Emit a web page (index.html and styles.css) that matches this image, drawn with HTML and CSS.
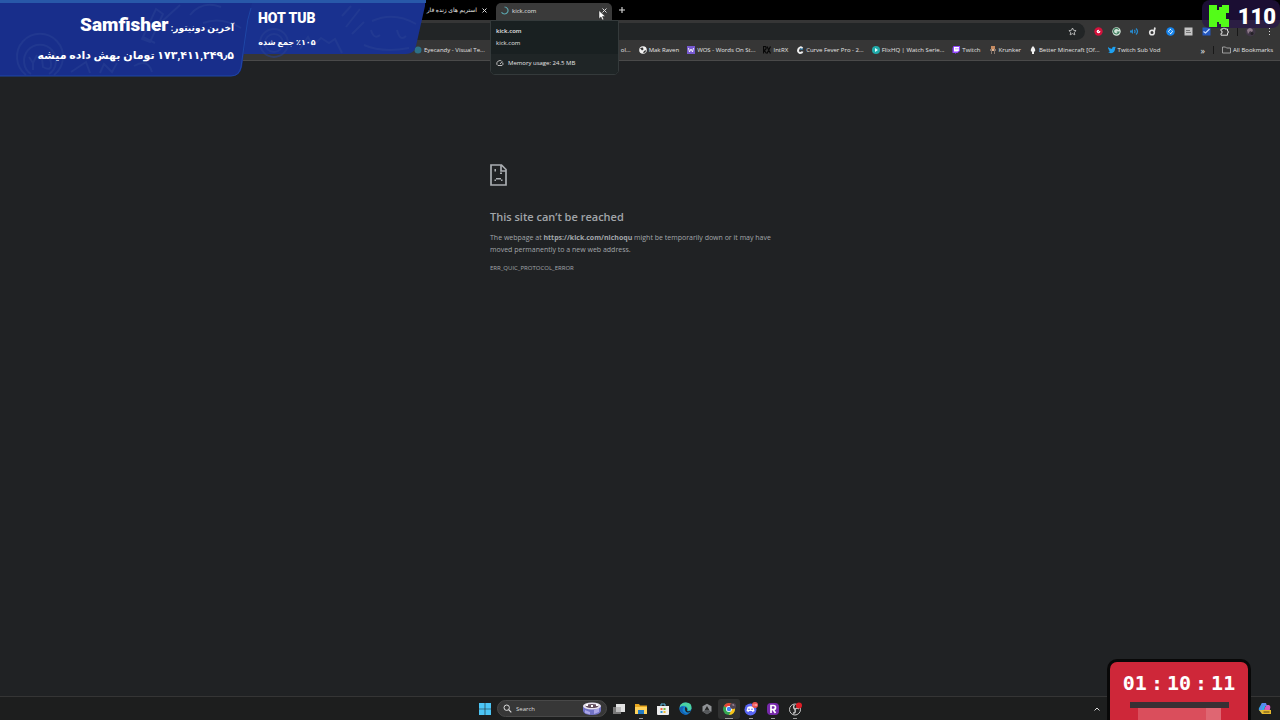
FILE: index.html
```html
<!DOCTYPE html>
<html lang="en">
<head>
    <meta charset="UTF-8">
    <meta name="viewport" content="width=device-width, initial-scale=1.0">
    <title>kick.com</title>
    <link rel="stylesheet" href="styles.css">
</head>
<body>
    <header class="browser">
        <div class="tab-strip">
            <div class="tab">
                <button class="tab-title" dir="rtl">استریم های زنده فار</button>
                <button class="icon-button" aria-label="Close tab"><svg width="5" height="5" viewBox="0 0 5 5"><path d="M.5.5l4 4M4.5.5l-4 4" stroke="#ddd"/></svg></button>
            </div>
            <div class="tab active">
                <svg width="9" height="9" viewBox="0 0 9 9"><path d="M4.5 1A3.5 3.5 0 1 1 1.5 6.3" fill="none" stroke="#5ba4ac" stroke-width="1.2"/></svg>
                <button class="tab-title">kick.com</button>
                <button class="icon-button" aria-label="Close tab"><svg width="5" height="5" viewBox="0 0 5 5"><path d="M.5.5l4 4M4.5.5l-4 4" stroke="#ddd"/></svg></button>
            </div>
            <button class="icon-button new-tab" aria-label="New tab"><svg width="6" height="6" viewBox="0 0 6 6"><path d="M3 0v6M0 3h6" stroke="#ddd" stroke-width="1.1"/></svg></button>
        </div>

        <div class="toolbar">
            <div class="address-bar">
                <input type="text" aria-label="Address">
                <button class="icon-button" aria-label="Bookmark this tab"><svg width="9" height="9" viewBox="0 0 9 9"><path d="M4.5 1l1.1 2.3 2.5.3-1.8 1.7.5 2.5-2.3-1.2-2.3 1.2.5-2.5L.9 3.6l2.5-.3z" fill="none" stroke="#d0d0d0" stroke-width=".8"/></svg></button>
            </div>
            <div class="extensions">
                <button class="icon-button" aria-label="Adblock"><svg width="9" height="9" viewBox="0 0 9 9"><circle cx="4.5" cy="4.5" r="4.2" fill="#d5123c"/><circle cx="4.5" cy="4.5" r="1.8" fill="#fff"/><path d="M4.5 4.5l1.8-1.8" stroke="#d5123c"/></svg></button>
                <button class="icon-button" aria-label="Grammarly"><svg width="9" height="9" viewBox="0 0 9 9"><circle cx="4.5" cy="4.5" r="4.2" fill="#d4e6da"/><path d="M6.7 2.7A2.8 2.8 0 1 0 7 5H4.8" fill="none" stroke="#3c7b5c" stroke-width="1.2"/></svg></button>
                <button class="icon-button" aria-label="Volume"><svg width="9" height="9" viewBox="0 0 9 9"><path d="M0 3.5h1.5L3 2v5L1.5 5.5H0z" fill="#278bd0"/><path d="M4.4 3q1.3 1.500 0 3M6 1.500q3 3 0 6" fill="none" stroke="#278bd0" stroke-width="1.2"/></svg></button>
                <button class="icon-button" aria-label="Downloader"><svg width="9" height="9" viewBox="0 0 9 9"><circle cx="4" cy="5.5" r="2.3" fill="none" stroke="#e4e4e4" stroke-width="1.6"/><path d="M6 5L7 .5" stroke="#e4e4e4" stroke-width="1.7"/></svg></button>
                <button class="icon-button" aria-label="Shazam"><svg width="9" height="9" viewBox="0 0 9 9"><circle cx="4.5" cy="4.5" r="4.3" fill="#1685ee"/><path d="M5 2L3 3.6q-1 1 .3 2M4 7l2-1.6q1-1-.3-2" fill="none" stroke="#fff"/></svg></button>
                <button class="icon-button" aria-label="Reader"><svg width="9" height="9" viewBox="0 0 9 9"><path d="M.5.5h8v8h-8z" fill="#c4c4c4"/><path d="M2 3.5h4M2 5.500h5" stroke="#777"/></svg></button>
                <button class="icon-button" aria-label="Tracker"><svg width="9" height="9" viewBox="0 0 9 9"><path d="M.5.5h8v8h-8z" fill="#2457bd"/><path d="M1.5 4.500l2 1.500L7.500 2" fill="none" stroke="#c7ddff" stroke-width="1.2"/></svg></button>
                <button class="icon-button" aria-label="Extensions"><svg width="9" height="9" viewBox="0 0 9 9"><path d="M1 2h2V1h2v1h2.500v2h.7v2h-.7v2.200H1V6.300h1V4H1z" fill="none" stroke="#d8d8d8"/></svg></button>
            </div>
            <span class="divider"></span>
            <button class="icon-button" aria-label="Profile"><svg width="11" height="11" viewBox="0 0 11 11"><circle cx="5.5" cy="5.5" r="5" fill="#403746"/><path d="M2 4q3-4 6 0l-1 2-2-1-2 3z" fill="#8e7989"/><circle cx="7" cy="7.5" r="1.5" fill="#242027"/></svg></button>
            <button class="icon-button menu" aria-label="Menu"><svg width="3" height="9" viewBox="0 0 3 9"><path d="M1 1h1v1H1zM1 4h1v1H1zM1 7h1v1H1z" fill="#ddd"/></svg></button>
        </div>

        <nav class="bookmarks">
            <a href="#"><svg width="8" height="8" viewBox="0 0 8 8"><circle cx="4" cy="4" r="3.5" fill="#2d7187"/></svg><span>Eyecandy - Visual Te...</span></a>
            <a href="#" class="under-card"><span>ol...</span></a>
            <a href="#"><svg width="8" height="8" viewBox="0 0 8 8"><circle cx="4" cy="4" r="3.8" fill="#f2f2f2"/><path d="M1 2l3-.5.5 2L3 4.5zM5 5l2-1-.5 2.5L4 7z" fill="#333"/></svg><span>Mak Raven</span></a>
            <a href="#"><svg width="8" height="8" viewBox="0 0 8 8"><path d="M0 0h8v8H0z" fill="#7659d0"/><path d="M1.5 2l1 4L4 3l1.5 3 1-4" fill="none" stroke="#fff" stroke-width=".9"/></svg><span>WOS - Words On St...</span></a>
            <a href="#"><svg width="8" height="8" viewBox="0 0 8 8"><path d="M.5 7.500v-7h2q1.500 2-.5 3.500H1l2.500 3.500M4 .5l3.500 7M7.500.5L4 7.500" fill="none" stroke="#080808" stroke-width="1.2"/></svg><span>IntRX</span></a>
            <a href="#"><svg width="8" height="8" viewBox="0 0 8 8"><path d="M6.5 2.500Q4 0 2.500 3T4 7q2 0 2.500-1.500" fill="none" stroke="#eee" stroke-width="2"/><path d="M4 3h3" stroke="#2c91cf"/></svg><span>Curve Fever Pro - 2...</span></a>
            <a href="#"><svg width="8" height="8" viewBox="0 0 8 8"><circle cx="4" cy="4" r="4" fill="#20aaa9"/><path d="M3 2l3 2-3 2z" fill="#e4ffff"/></svg><span>FlixHQ | Watch Serie...</span></a>
            <a href="#"><svg width="8" height="8" viewBox="0 0 8 8"><path d="M1.5 0H8v5L5.500 7H4L3 8V7H.5V2z" fill="#9146ff"/><path d="M2 1h5v3.500L5.500 5.500H2z" fill="#fff"/><path d="M4 2v1.500M6 2v1.500" stroke="#9146ff" stroke-width=".7"/></svg><span>Twitch</span></a>
            <a href="#"><svg width="8" height="8" viewBox="0 0 8 8"><path d="M2 0h4v3H2z" fill="#c58b62"/><path d="M1 3h6v2H6v3H5V5H3v3H2V5H1z" fill="#86766d"/><path d="M3 3h2v2H3z" fill="#e1b38e"/></svg><span>Krunker</span></a>
            <a href="#"><svg width="8" height="8" viewBox="0 0 8 8"><path d="M4 0q3 3 2 5.500H5V8H3V5.500H2Q1 3 4 0z" fill="#eee"/></svg><span>Better Minecraft [Of...</span></a>
            <a href="#"><svg width="8" height="8" viewBox="0 0 8 8"><path d="M0 1q2 2 4 1.700Q4 .5 6 .7l1 .4 1-.3-.8 1.200Q7 7 3 7.300L0 6.500l2-.5L.6 4.500h1L.3 3z" fill="#1da1f2"/></svg><span>Twitch Sub Vod</span></a>
            <button class="more" aria-label="More bookmarks">»</button>
            <span class="divider"></span>
            <a href="#"><svg width="9" height="8" viewBox="0 0 9 8"><path d="M.5 1h3l1 1h4v5h-8z" fill="none" stroke="#aaa" stroke-width=".9"/></svg><span>All Bookmarks</span></a>
        </nav>

        <div class="tab-card">
            <div class="tab-card-title">
                <strong>kick.com</strong>
                <span>kick.com</span>
            </div>
            <div class="tab-card-memory">
                <svg width="8" height="8" viewBox="0 0 8 8"><path d="M2 6.5Q0 5.5 1 3.5T4 1.5q1 0 1.5.5M6.7 3.5q1 2-.7 3H2M4 5l2.3-2.5" fill="none" stroke="#ccc" stroke-width=".9"/></svg>
                <span>Memory usage: 24.5 MB</span>
            </div>
        </div>
        <svg class="cursor" width="8" height="11" viewBox="0 0 8 11"><path d="M1 .5v8.200l2-1.800 1.300 3 1.500-.7L4.500 6.500h2.800z" fill="#fff" stroke="#222" stroke-width=".5"/></svg>
    </header>

    <main class="page">
        <div class="error">
            <svg width="17" height="22" viewBox="0 0 17 22"><path d="M1 1h10.500L16 5.500V21H1zM11 1v6h5" fill="none" stroke="#a9adb1" stroke-width="1.700"/><path d="M4.500 5H6v2.500H4.500zM10 8.500h2V10h-2zM6 14h5v1.500H6zM4.500 15.500H6V17H4.500zM11 15.500h1.500V17H11z" fill="#a9adb1"/></svg>
            <h1>This site can’t be reached</h1>
            <p>The webpage at <strong>https://kick.com/nichoqu</strong> might be temporarily down or it may have moved permanently to a new web address.</p>
            <p class="error-code">ERR_QUIC_PROTOCOL_ERROR</p>
        </div>
    </main>

    <footer class="taskbar">
        <div class="apps">
            <button class="app" aria-label="Start"><svg width="12" height="12" viewBox="0 0 12 12"><path d="M0 0h5.700v5.700H0zM6.300 0H12v5.700H6.300zM0 6.300h5.700V12H0zM6.300 6.300H12V12H6.300z" fill="#4cc5f5"/></svg></button>
            <label class="search">
                <svg width="9" height="9" viewBox="0 0 9 9"><circle cx="3.7" cy="3.7" r="2.7" fill="none" stroke="#ddd"/><path d="M5.7 5.7L8.3 8.3" stroke="#ddd" stroke-width="1.2"/></svg>
                <input type="text" placeholder="Search" aria-label="Search">
                <svg width="20" height="14" viewBox="0 0 20 14"><path d="M1 4h18v5q-1 4-9 4t-9-4z" fill="#7172c5"/><path d="M3 8l5 2v2.5L3 11zM12 8l5-2v4l-5 2z" fill="#aaa5e6"/><ellipse cx="10" cy="4" rx="9" ry="3.5" fill="#e8e2ef"/><ellipse cx="10" cy="4" rx="6.500" ry="2" fill="#65505f"/><path d="M4 2h2v2H4zM9 3h2v2H9zM14 2h2v2h-2z" fill="#fff"/></svg>
            </label>
            <button class="app" aria-label="Task view"><svg width="12" height="12" viewBox="0 0 12 12"><path d="M0 4h8v7H0z" fill="#777"/><path d="M3 1h9v8H3z" fill="#e2e2e2"/><path d="M3 4h5v5H3z" fill="#bbb"/></svg></button>
            <button class="app running" aria-label="File Explorer"><svg width="12" height="12" viewBox="0 0 12 12"><path d="M0 1h4l1 1.500h7V11H0z" fill="#e9a820"/><path d="M0 4h12v7H0z" fill="#ffd35c"/><path d="M3 7h6v4H3z" fill="#247cc5"/></svg></button>
            <button class="app" aria-label="Store"><svg width="12" height="12" viewBox="0 0 12 12"><path d="M4 3V1h4v2" fill="none" stroke="#58b5de"/><path d="M0 3h12v8q0 1-1 1H1q-1 0-1-1z" fill="#eee"/><path d="M3.500 5h2v2h-2z" fill="#ed6541"/><path d="M6.500 5h2v2h-2z" fill="#73b743"/><path d="M3.500 8h2v2h-2z" fill="#3197d5"/><path d="M6.500 8h2v2h-2z" fill="#edb92d"/></svg></button>
            <button class="app" aria-label="Edge"><svg width="13" height="13" viewBox="0 0 13 13"><circle cx="6.500" cy="6.500" r="6" fill="#1685d1"/><path d="M.5 6Q1 .5 7 .5t5.500 6Q12 9 8.500 8.500 9.500 5 6 4T.5 6z" fill="#4bd2a1"/><path d="M5 5q-3 3 0 5.500t6.500 0Q7 15 3 11T1 5.500Q3 4 5 5z" fill="#1461b4"/><path d="M6 5q2 0 2.300 2.500L8 9q3 1 4.500-1-1 3-4 2.500T6 5z" fill="#202326"/></svg></button>
            <button class="app" aria-label="Launcher"><svg width="12" height="12" viewBox="0 0 12 12"><path d="M6 .8l4.500 2.500v5.300L6 11.200 1.500 8.600V3.300z" fill="#8f9295"/><path d="M6 3l2.500 4.500h-5z" fill="#222"/><path d="M1.500 8.600L6 6.500l4.500 2.100L6 11.200z" fill="#55585b"/></svg></button>
            <button class="app current" aria-label="Chrome"><svg width="14" height="14" viewBox="0 0 14 14"><circle cx="7" cy="7" r="6" fill="#35a852"/><path d="M1.800 4A6 6 0 0 1 13 7H7z" fill="#e94335"/><path d="M13 6A6 6 0 0 1 7 13l2.500-5L9 5z" fill="#fbc116"/><circle cx="7" cy="7" r="3" fill="#fff"/><circle cx="7" cy="7" r="2.200" fill="#4285f4"/><circle cx="11" cy="4" r="3" fill="#504453"/><path d="M9.500 3l2-1 1 2z" fill="#a894a1"/></svg></button>
            <button class="app running" aria-label="Discord"><svg width="14" height="14" viewBox="0 0 14 14"><circle cx="6.500" cy="7.500" r="6" fill="#5865f2"/><path d="M3.500 5q3-1.500 6 0l1 4-2 1-.6-1H5.100l-.6 1-2-1z" fill="#fff"/><circle cx="5" cy="7.300" r=".8" fill="#5865f2"/><circle cx="8" cy="7.300" r=".8" fill="#5865f2"/><circle cx="11" cy="3" r="3" fill="#ee5454"/><path d="M9.500 3h1M12 2v2" stroke="#fff" stroke-width=".8"/></svg></button>
            <button class="app running" aria-label="Rush"><svg width="12" height="12" viewBox="0 0 12 12"><rect width="12" height="12" rx="4" fill="#7629aa"/><path d="M4 10V2.500h2.500q2 0 2 2t-2 2H4M6 6.500L8.500 10" fill="none" stroke="#fff" stroke-width="1.700"/></svg></button>
            <button class="app running" aria-label="OBS Studio"><svg width="14" height="14" viewBox="0 0 14 14"><circle cx="7" cy="7.500" r="5.500" fill="#242424" stroke="#ccc"/><path d="M6.500 3q-2 2 .5 4.500M11 7q-2-2-4 .5M5 11q3 .5 2-3.500" fill="none" stroke="#ccc" stroke-width="1.400"/><circle cx="11" cy="3.500" r="3" fill="#df1d26"/></svg></button>
        </div>
        <div class="tray">
            <button class="icon-button" aria-label="Show hidden icons"><svg width="6" height="4" viewBox="0 0 6 4"><path d="M.5 3.500L3 1l2.500 2.500" fill="none" stroke="#ddd"/></svg></button>
            <button class="icon-button" aria-label="Copilot"><svg width="13" height="13" viewBox="0 0 13 13"><path d="M4 1h4L6 9H3Q0 9 1 6z" fill="#2dafe5"/><path d="M8 3h3q2 1 1 4l-1 4H5l1-3z" fill="#d85abd"/><path d="M4 1h4l1 3H5L3.500 9 1 8z" fill="#5789ed"/><path d="M1 8l3 4h3l-2-4z" fill="#d6bd4b"/><path d="M4 8h9v4H4z" fill="#e7b92d"/><path d="M5.500 10h6" stroke="#594719"/></svg></button>
        </div>
    </footer>

    <!-- stream overlays -->
    <aside class="donations">
        <svg class="donations-shape" width="428" height="78" viewBox="0 0 428 78">
            <path d="M0 0h426q-1 2-1 6l-9 40q-2 8-10 8H238z" fill="#19318f"/>
            <path d="M0 0h426v3H0z" fill="#2858a9"/>
            <g fill="none" stroke="#2a4295" stroke-width="2" opacity=".5">
                <circle cx="274" cy="43" r="14"/><circle cx="274" cy="43" r="9"/>
                <path d="M300 49l8-12 5 9 8-8 8 5 6-4 7 14M342 16l9-10M346 27l14-18M352 34l12-12M372 21q22-10 44 3M371 30q3 10 9 5M397 30q3 12 9 6M364 45q18 8 45 3"/>
            </g>
            <path d="M0 3h252q-3 8-4 18l-6 46q-2 9-10 9H0z" fill="#182e8b"/>
            <path d="M251 8q-4 12-5 24l-5 35q-2 9-10 9H0" fill="none" stroke="#1e46a6"/>
            <g fill="none" stroke="#2a4295" stroke-width="2" opacity=".5">
                <path d="M26 75a23 23 0 1 1 28 0M31 74a16 16 0 1 1 18 0"/>
                <path d="M29 57l4 6 4-8M33 62v8M42 59q8-5 9 4t-8 4zM71 72l15-10 4 11M100 73l4-9 8 8 5-9M134 66q14-8 18 6M142 39l14-30 7 5-13 28zM158 25l22-20M190 15q12-15 31-8M203 23q18-7 38 5M143 37l12 6"/>
            </g>
        </svg>
        <div class="last-donor" dir="rtl" lang="fa">
            <div class="donor">آخرین دونیتور: <strong>Samfisher</strong></div>
            <div>۱۷۳,۴۱۱,۲۴۹٫۵ تومان بهش داده میشه</div>
        </div>
        <div class="goal">
            <strong>HOT TUB</strong>
            <div dir="rtl" lang="fa">٪۱۰۵ جمع شده</div>
        </div>
    </aside>

    <aside class="viewers">
        <svg width="20" height="22" viewBox="0 0 20 22"><path d="M0 0h8v5h2V2h3V0h7v8h-3v6h3v8h-8v-3h-2v-2H8v5H0z" fill="#53fc18"/></svg>
        <span>110</span>
    </aside>

    <aside class="timer">
        <div class="timer-digits"><span>01</span><span>:</span><span>10</span><span>:</span><span>11</span></div>
        <div class="timer-lid"></div>
        <div class="timer-jar"></div>
    </aside>
</body>
</html>
```
FILE: styles.css
```css
* {
    box-sizing: border-box;
}

body {
    margin: 0;
    min-height: 100vh;
    display: flex;
    flex-direction: column;
    background-color: #202224;
    color: #e4e4e4;
    font-family: "Open Sans", "Noto Sans", "DejaVu Sans", sans-serif;
    font-size: 6px;
}

button,
input {
    border: 0;
    padding: 0;
    background: none;
    color: inherit;
    font: inherit;
}

svg {
    display: block;
    flex: none;
}

.browser {
    position: relative;
}

/* tabs */
.tab-strip {
    display: flex;
    height: 20px;
    padding-left: 400px;
    background-color: #000;
}

.tab {
    display: flex;
    align-items: center;
    width: 92px;
    padding-right: 5px;
    gap: 5px;
}

.tab-title {
    flex: 1;
    white-space: nowrap;
    text-align: start;
}

.tab.active {
    width: 116px;
    margin: 3px 0 0 4px;
    padding: 0 5px 2px 4px;
    gap: 3px;
    border-radius: 5px 5px 0 0;
    background-color: #3a3a3a;
}

.icon-button {
    display: flex;
    align-items: center;
    justify-content: center;
}

.new-tab {
    width: 20px;
}

/* toolbar */
.toolbar {
    display: flex;
    align-items: center;
    height: 20px;
    padding-top: 3px;
    background-color: #363636;
}

.address-bar {
    display: flex;
    flex: 1;
    align-items: center;
    height: 17px;
    margin-right: 4px;
    padding-right: 8px;
    border-radius: 0 9px 9px 0;
    background-color: #222526;
}

.address-bar input {
    flex: 1;
}

.extensions {
    display: flex;
}

.extensions .icon-button {
    width: 18px;
}

.divider {
    width: 1px;
    height: 8px;
    background-color: #181818;
}

.toolbar .divider {
    margin: 0 7px 0 4px;
}

.menu {
    margin: 0 9px 0 12px;
}

/* bookmarks */
.bookmarks {
    display: flex;
    align-items: center;
    height: 21px;
    padding: 0 7px 0 414px;
    gap: 8px;
    border-bottom: 1px solid #4a4a4a;
    background-color: #363636;
    white-space: nowrap;
}

.bookmarks a {
    display: flex;
    align-items: center;
    gap: 2px;
    color: inherit;
    text-decoration: none;
}

.bookmarks .under-card {
    margin-left: 128px;
}

.more {
    margin-left: auto;
    font-size: 9px;
}

/* tab hover card */
.tab-card {
    position: absolute;
    top: 20px;
    left: 490px;
    width: 129px;
    border: 1px solid #343a3b;
    border-radius: 0 0 5px 5px;
    background-color: #192021;
}

.tab-card-title {
    display: flex;
    flex-direction: column;
    height: 33px;
    padding: 5px;
    gap: 2px;
    line-height: 10px;
}

.tab-card-title strong {
    font-weight: 600;
}

.tab-card-memory {
    display: flex;
    align-items: center;
    height: 20px;
    padding: 0 5px 2px;
    gap: 4px;
    border-radius: 0 0 4px 4px;
    background-color: #1f2526;
}

.cursor {
    position: absolute;
    top: 10px;
    left: 598px;
}

/* error page */
.page {
    flex: 1;
}

.error {
    width: 300px;
    margin: 103px auto 0;
    color: #a2a6aa;
    font-size: 7px;
    line-height: 12px;
}

.error h1 {
    margin: 22px 0 6px;
    font-size: 11px;
    font-weight: 600;
    line-height: 18px;
}

.error p {
    margin: 0 0 6px;
}

.error .error-code {
    font-size: 6px;
}

/* taskbar */
.taskbar {
    position: relative;
    display: flex;
    justify-content: center;
    height: 24px;
    border-top: 1px solid #353535;
    background-color: #1d1e1e;
}

.apps {
    display: flex;
    align-items: center;
}

.app {
    display: flex;
    align-items: center;
    justify-content: center;
    width: 22px;
    height: 20px;
    border-radius: 3px;
}

.running,
.current {
    background: linear-gradient(#999, #999) center bottom / 4px 1px no-repeat;
}

.current {
    background-color: #303131;
    background-size: 8px 1px;
}

.search {
    display: flex;
    align-items: center;
    width: 110px;
    height: 17px;
    margin: 0 1px;
    padding: 0 4px 0 5px;
    gap: 4px;
    border: 1px solid #484848;
    border-radius: 9px;
    background-color: #373737;
}

.search input {
    flex: 1;
    min-width: 0;
}

.search input::placeholder {
    color: #ddd;
}

.tray {
    position: absolute;
    right: 9px;
    display: flex;
    align-items: center;
    height: 23px;
    gap: 158px;
}

/* donation banner */
.donations {
    position: absolute;
    top: 0;
    left: 0;
    display: flex;
    color: #fff;
    font-family: Roboto, "DejaVu Sans", sans-serif;
    font-weight: 700;
}

.donations-shape {
    position: absolute;
}

.last-donor {
    position: relative;
    width: 234px;
    padding-top: 11px;
    font-size: 11px;
    line-height: 28px;
    white-space: nowrap;
}

.donor {
    font-size: 9px;
}

.donor strong {
    font-size: 19px;
}

.goal {
    position: relative;
    padding: 7px 0 0 24px;
    font-size: 8px;
    line-height: 22px;
}

.goal strong {
    font-size: 14px;
}

/* viewer count */
.viewers {
    position: absolute;
    top: 0;
    right: 0;
    display: flex;
    align-items: center;
    height: 28px;
    padding: 4px 4px 0 7px;
    gap: 9px;
    border-radius: 8px;
    background-color: rgba(38, 20, 72, 0.7);
    color: #fff;
    font-family: Roboto, sans-serif;
    font-size: 22px;
    font-weight: 900;
}

/* countdown */
.timer {
    position: absolute;
    right: 29px;
    bottom: 0;
    display: flex;
    flex-direction: column;
    align-items: center;
    width: 144px;
    height: 61px;
    padding-top: 10px;
    border: solid #080808;
    border-width: 3px 3px 0;
    border-radius: 10px 10px 0 0;
    background-color: #ce2739;
    color: #fff;
}

.timer-digits {
    display: flex;
    gap: 4px;
    font-family: "DejaVu Sans Mono", monospace;
    font-size: 20px;
    font-weight: 700;
    line-height: 22px;
}

.timer-lid {
    width: 99px;
    height: 6px;
    margin-top: 8px;
    background-color: #383034;
}

.timer-jar {
    width: 83px;
    flex: 1;
    border-right: 15px solid #df6672;
    background-color: #da4e5c;
}
```
